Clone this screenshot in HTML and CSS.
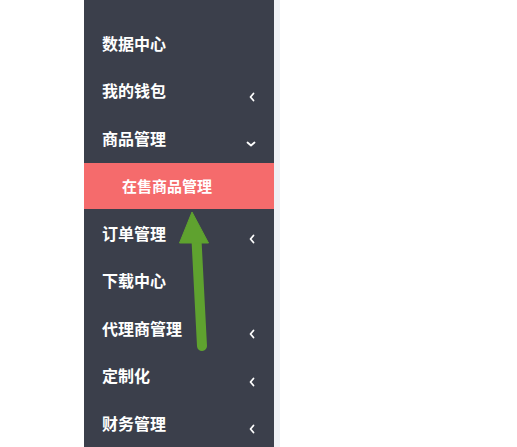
FILE: index.html
```html
<!DOCTYPE html>
<html lang="zh-CN">
<head>
<meta charset="utf-8">
<link rel="stylesheet" href="styles.css">
</head>
<body>
<div class="page">
  <nav class="sidebar">
    <ul class="menu">
      <li class="item"><span class="label">数据中心</span></li>
      <li class="item"><span class="label">我的钱包</span><svg class="chev" viewBox="0 0 8 10" width="8" height="10"><path d="M5.5 1.5 L2.5 5 L5.5 8.5" /></svg></li>
      <li class="item"><span class="label">商品管理</span><svg class="chev" viewBox="0 0 10 8" width="10" height="8"><path d="M1.5 2.5 L5 5.5 L8.5 2.5" /></svg></li>
      <li class="item sub active"><span class="label">在售商品管理</span></li>
      <li class="item"><span class="label">订单管理</span><svg class="chev" viewBox="0 0 8 10" width="8" height="10"><path d="M5.5 1.5 L2.5 5 L5.5 8.5" /></svg></li>
      <li class="item"><span class="label">下载中心</span></li>
      <li class="item"><span class="label">代理商管理</span><svg class="chev" viewBox="0 0 8 10" width="8" height="10"><path d="M5.5 1.5 L2.5 5 L5.5 8.5" /></svg></li>
      <li class="item"><span class="label">定制化</span><svg class="chev" viewBox="0 0 8 10" width="8" height="10"><path d="M5.5 1.5 L2.5 5 L5.5 8.5" /></svg></li>
      <li class="item"><span class="label">财务管理</span><svg class="chev" viewBox="0 0 8 10" width="8" height="10"><path d="M5.5 1.5 L2.5 5 L5.5 8.5" /></svg></li>
    </ul>
  </nav>
  <div class="content"></div>
</div>
<svg class="pointer" viewBox="0 0 517 447" width="517" height="447">
  <line x1="196.5" y1="240" x2="202" y2="346" stroke="#5fa22f" stroke-width="10" stroke-linecap="round"/>
  <polygon points="192,212 179.5,243 208.5,243" fill="#5fa22f" stroke="#5fa22f" stroke-width="1" stroke-linejoin="round"/>
</svg>
</body>
</html>
```
FILE: styles.css
```css
html, body {
  margin: 0;
  padding: 0;
  background: #ffffff;
}
body {
  width: 517px;
  height: 447px;
  overflow: hidden;
  position: relative;
  font-family: "Microsoft YaHei", "Noto Sans CJK SC", "Noto Sans", sans-serif;
}
.page {
  display: flex;
  height: 447px;
  padding-left: 84px;
}
.sidebar {
  width: 190px;
  height: 100%;
  background: #3b3f4b;
  border-right: 6px solid #eff1f5;
}
.menu {
  list-style: none;
  margin: 0;
  padding: 19px 0 0 0;
}
.item {
  height: 47.5px;
  display: flex;
  align-items: center;
  padding-left: 18px;
  padding-right: 18px;
  color: #ffffff;
  font-size: 16px;
  font-weight: 700;
  position: relative;
}
.label {
  line-height: 20px;
}
.chev {
  margin-left: auto;
  margin-top: 13px;
  fill: none;
  stroke: #ffffff;
  stroke-width: 1.8;
  stroke-linecap: round;
  stroke-linejoin: round;
}
.sub {
  height: 46px;
  margin-top: 1.5px;
  padding-left: 38px;
  font-size: 15px;
}
.active {
  background: #f56b6c;
}
.content {
  flex: 1;
}
.pointer {
  position: absolute;
  left: 0;
  top: 0;
  pointer-events: none;
}
```
